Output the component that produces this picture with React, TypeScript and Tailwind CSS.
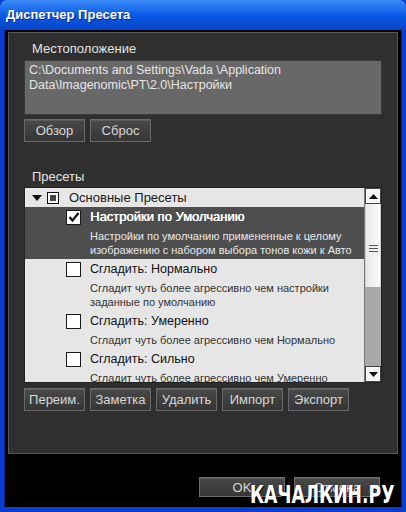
import React from 'react';

type Preset = {
  title: string;
  lines: string[];
  checked?: boolean;
  selected?: boolean;
};

const presets: Preset[] = [
  {
    title: 'Настройки по Умолчанию',
    lines: ['Настройки по умолчанию примененные к целому', 'изображению с набором выбора тонов кожи к Авто'],
    checked: true,
    selected: true,
  },
  {
    title: 'Сгладить: Нормально',
    lines: ['Сгладит чуть более агрессивно чем настройки', 'заданные по умолчанию'],
  },
  {
    title: 'Сгладить: Умеренно',
    lines: ['Сгладит чуть более агрессивно чем Нормально'],
  },
  {
    title: 'Сгладить: Сильно',
    lines: ['Сгладит чуть более агрессивно чем Умеренно'],
  },
];

const DarkButton: React.FC<{ label: string; className?: string }> = ({ label, className = '' }) => (
  <button
    className={`h-[23px] border border-[#6a6a6a] bg-gradient-to-b from-[#4a4a4a] to-[#353535] text-[13px] text-[#d8d8d8] shadow-[inset_0_1px_0_#5c5c5c] ${className}`}
  >
    {label}
  </button>
);

const CheckBox: React.FC<{ checked?: boolean }> = ({ checked }) => (
  <div className="w-[15px] h-[15px] shrink-0 bg-white border border-[#1a1a1a] flex items-center justify-center">
    {checked && (
      <svg width="12" height="12" viewBox="0 0 12 12">
        <path d="M1.5 6 L4.5 9.5 L10.5 2" fill="none" stroke="#111" strokeWidth="2.2" />
      </svg>
    )}
  </div>
);

const ScrollBar: React.FC = () => (
  <div className="w-[17px] shrink-0 flex flex-col bg-[#a9a9a9] border-l border-[#777]">
    <div className="h-[16px] bg-[#f4f4f4] border border-[#444] flex items-center justify-center">
      <svg width="9" height="5" viewBox="0 0 9 5">
        <path d="M0 5 L4.5 0 L9 5 Z" fill="#111" />
      </svg>
    </div>
    <div className="h-[83px] bg-gradient-to-r from-[#e8e8e8] to-[#fafafa] border-x border-[#cfcfcf] flex items-center justify-center">
      <div className="flex flex-col gap-[2px] mt-[6px]">
        <div className="w-[9px] h-px bg-[#555]" />
        <div className="w-[9px] h-px bg-[#555]" />
        <div className="w-[9px] h-px bg-[#555]" />
      </div>
    </div>
    <div className="flex-1" />
    <div className="h-[16px] bg-[#f4f4f4] border border-[#444] flex items-center justify-center">
      <svg width="9" height="5" viewBox="0 0 9 5">
        <path d="M0 0 L9 0 L4.5 5 Z" fill="#111" />
      </svg>
    </div>
  </div>
);

export default function App() {
  return (
    <div className="relative w-[406px] h-[512px] flex flex-col bg-[#0a3cd2] font-['Liberation_Sans',Arial,sans-serif] overflow-hidden">
      {/* title bar */}
      <div className="h-[30px] shrink-0 rounded-t-[7px] bg-gradient-to-b from-[#3c8cf8] via-[#0a5ae6] to-[#0744c8] flex items-center pl-[6px]">
        <span className="text-white font-bold text-[13px] [text-shadow:1px_1px_0_#0a2a80]">Диспетчер Пресета</span>
      </div>

      <div className="flex-1 mx-[4px] mb-[5px] bg-black flex flex-col border-x border-[#06208a]">
        {/* main panel */}
        <div className="mt-[2px] mx-[3px] h-[422px] bg-[#2f2f2f] border border-[#585858] px-[15px] pt-[8px] flex flex-col">
          <div className="pl-[8px] text-[13px] leading-[16px] text-[#e4e4e4]">Местоположение</div>
          <div className="mt-[3px] h-[55px] bg-[#686868] border border-[#3a3a3a] px-[4px] pt-[2px] text-[12.5px] leading-[15px] text-[#e6e6e6]">
            C:\Documents and Settings\Vada \Application
            <br />
            Data\Imagenomic\PT\2.0\Настройки
          </div>
          <div className="mt-[4px] flex gap-[5px]">
            <DarkButton label="Обзор" className="w-[61px]" />
            <DarkButton label="Сброс" className="w-[61px]" />
          </div>

          <div className="mt-[27px] pl-[8px] text-[13px] leading-[16px] text-[#e4e4e4]">Пресеты</div>

          {/* preset list */}
          <div className="mt-[2px] h-[196px] flex bg-[#e6e6e6] border border-[#222] overflow-hidden">
            <div className="flex-1 flex flex-col overflow-hidden">
              <div className="h-[19px] shrink-0 flex items-center pl-[7px] text-[#1a1a1a]">
                <svg width="10" height="6" viewBox="0 0 10 6">
                  <path d="M0 0 L10 0 L5 6 Z" fill="#111" />
                </svg>
                <div className="ml-[5px] w-[12px] h-[12px] border border-[#111] bg-white p-[2px]">
                  <div className="w-full h-full bg-[#444]" />
                </div>
                <span className="ml-[10px] text-[13px]">Основные Пресеты</span>
              </div>
              {presets.map((p) => (
                <div
                  key={p.title}
                  className={`shrink-0 pl-[41px] pt-[3px] pb-[2px] ${p.selected ? 'bg-[#4e4e4e] text-white' : 'text-[#111]'}`}
                >
                  <div className="flex items-center h-[14px]">
                    <CheckBox checked={p.checked} />
                    <span
                      className={`ml-[9px] leading-[14px] ${p.selected ? 'text-[13px] [text-shadow:0.5px_0_0_#fff]' : 'text-[12.5px]'}`}
                    >
                      {p.title}
                    </span>
                  </div>
                  <div className={`mt-[5px] pl-[24px] text-[11px] leading-[14px] ${p.selected ? 'text-[#e8e8e8]' : 'text-[#333]'}`}>
                    {p.lines.map((l) => (
                      <div key={l} className="whitespace-nowrap">{l}</div>
                    ))}
                  </div>
                </div>
              ))}
            </div>
            <ScrollBar />
          </div>

          <div className="mt-[5px] flex gap-[5px]">
            <DarkButton label="Переим." className="w-[61px]" />
            <DarkButton label="Заметка" className="w-[61px]" />
            <DarkButton label="Удалить" className="w-[61px]" />
            <DarkButton label="Импорт" className="w-[61px]" />
            <DarkButton label="Экспорт" className="w-[61px]" />
          </div>
        </div>

        {/* dialog buttons */}
        <div className="mt-[23px] flex justify-end gap-[9px] pr-[21px]">
          <DarkButton label="OK" className="w-[86px] !h-[20px] text-[#bbb]" />
          <DarkButton label="Отмена" className="w-[86px] !h-[20px] text-[#bbb]" />
        </div>
      </div>

      <div className="absolute left-[250px] top-[482px] whitespace-nowrap text-white font-['DejaVu_Sans'] font-bold text-[25px] leading-[25px] [transform:scaleX(0.69)] origin-left [text-shadow:1px_1px_0_#000]">
        КАЧАЛКИН.РУ
      </div>
    </div>
  );
}
